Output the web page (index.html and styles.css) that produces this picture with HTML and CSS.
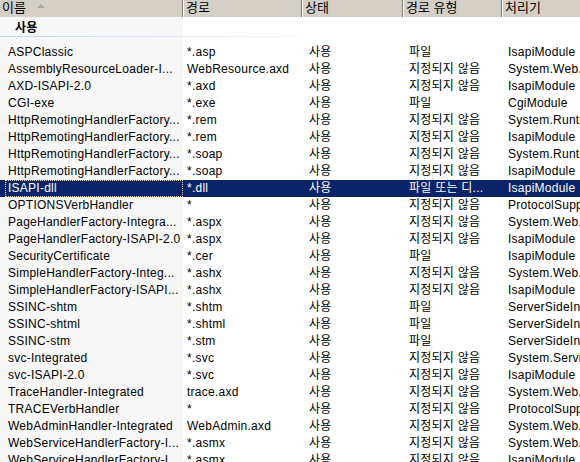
FILE: index.html
```html
<!DOCTYPE html>
<html lang="ko">
<head>
<meta charset="utf-8">
<link rel="stylesheet" href="styles.css">
</head>
<body>
<div class="list">
  <div class="header">
    <div class="hcell">이름 <span class="sort"></span></div>
    <div class="hcell">경로</div>
    <div class="hcell">상태</div>
    <div class="hcell">경로 유형</div>
    <div class="hcell">처리기</div>
  </div>
  <div class="body">
    <div class="group"><span class="gtitle">사용</span><span class="gline"></span></div>
    <div class="row"><div class="c name">ASPClassic</div><div class="c path">*.asp</div><div class="c st">사용</div><div class="c type">파일</div><div class="c hd">IsapiModule</div></div>
    <div class="row"><div class="c name">AssemblyResourceLoader-I...</div><div class="c path">WebResource.axd</div><div class="c st">사용</div><div class="c type">지정되지 않음</div><div class="c hd">System.Web.Handlers</div></div>
    <div class="row"><div class="c name">AXD-ISAPI-2.0</div><div class="c path">*.axd</div><div class="c st">사용</div><div class="c type">지정되지 않음</div><div class="c hd">IsapiModule</div></div>
    <div class="row"><div class="c name">CGI-exe</div><div class="c path">*.exe</div><div class="c st">사용</div><div class="c type">파일</div><div class="c hd">CgiModule</div></div>
    <div class="row"><div class="c name">HttpRemotingHandlerFactory...</div><div class="c path">*.rem</div><div class="c st">사용</div><div class="c type">지정되지 않음</div><div class="c hd">System.Runtime</div></div>
    <div class="row"><div class="c name">HttpRemotingHandlerFactory...</div><div class="c path">*.rem</div><div class="c st">사용</div><div class="c type">지정되지 않음</div><div class="c hd">IsapiModule</div></div>
    <div class="row"><div class="c name">HttpRemotingHandlerFactory...</div><div class="c path">*.soap</div><div class="c st">사용</div><div class="c type">지정되지 않음</div><div class="c hd">System.Runtime</div></div>
    <div class="row"><div class="c name">HttpRemotingHandlerFactory...</div><div class="c path">*.soap</div><div class="c st">사용</div><div class="c type">지정되지 않음</div><div class="c hd">IsapiModule</div></div>
    <div class="row sel"><div class="c name"><span class="focus">ISAPI-dll</span></div><div class="c path">*.dll</div><div class="c st">사용</div><div class="c type">파일 또는 디...</div><div class="c hd">IsapiModule</div></div>
    <div class="row"><div class="c name">OPTIONSVerbHandler</div><div class="c path">*</div><div class="c st">사용</div><div class="c type">지정되지 않음</div><div class="c hd">ProtocolSupportModule</div></div>
    <div class="row"><div class="c name">PageHandlerFactory-Integra...</div><div class="c path">*.aspx</div><div class="c st">사용</div><div class="c type">지정되지 않음</div><div class="c hd">System.Web.UI</div></div>
    <div class="row"><div class="c name">PageHandlerFactory-ISAPI-2.0</div><div class="c path">*.aspx</div><div class="c st">사용</div><div class="c type">지정되지 않음</div><div class="c hd">IsapiModule</div></div>
    <div class="row"><div class="c name">SecurityCertificate</div><div class="c path">*.cer</div><div class="c st">사용</div><div class="c type">파일</div><div class="c hd">IsapiModule</div></div>
    <div class="row"><div class="c name">SimpleHandlerFactory-Integ...</div><div class="c path">*.ashx</div><div class="c st">사용</div><div class="c type">지정되지 않음</div><div class="c hd">System.Web.UI</div></div>
    <div class="row"><div class="c name">SimpleHandlerFactory-ISAPI...</div><div class="c path">*.ashx</div><div class="c st">사용</div><div class="c type">지정되지 않음</div><div class="c hd">IsapiModule</div></div>
    <div class="row"><div class="c name">SSINC-shtm</div><div class="c path">*.shtm</div><div class="c st">사용</div><div class="c type">파일</div><div class="c hd">ServerSideIncludeModule</div></div>
    <div class="row"><div class="c name">SSINC-shtml</div><div class="c path">*.shtml</div><div class="c st">사용</div><div class="c type">파일</div><div class="c hd">ServerSideIncludeModule</div></div>
    <div class="row"><div class="c name">SSINC-stm</div><div class="c path">*.stm</div><div class="c st">사용</div><div class="c type">파일</div><div class="c hd">ServerSideIncludeModule</div></div>
    <div class="row"><div class="c name">svc-Integrated</div><div class="c path">*.svc</div><div class="c st">사용</div><div class="c type">지정되지 않음</div><div class="c hd">System.ServiceModel</div></div>
    <div class="row"><div class="c name">svc-ISAPI-2.0</div><div class="c path">*.svc</div><div class="c st">사용</div><div class="c type">지정되지 않음</div><div class="c hd">IsapiModule</div></div>
    <div class="row"><div class="c name">TraceHandler-Integrated</div><div class="c path">trace.axd</div><div class="c st">사용</div><div class="c type">지정되지 않음</div><div class="c hd">System.Web.Handlers</div></div>
    <div class="row"><div class="c name">TRACEVerbHandler</div><div class="c path">*</div><div class="c st">사용</div><div class="c type">지정되지 않음</div><div class="c hd">ProtocolSupportModule</div></div>
    <div class="row"><div class="c name">WebAdminHandler-Integrated</div><div class="c path">WebAdmin.axd</div><div class="c st">사용</div><div class="c type">지정되지 않음</div><div class="c hd">System.Web.Handlers</div></div>
    <div class="row"><div class="c name">WebServiceHandlerFactory-I...</div><div class="c path">*.asmx</div><div class="c st">사용</div><div class="c type">지정되지 않음</div><div class="c hd">System.Web.Services</div></div>
    <div class="row"><div class="c name">WebServiceHandlerFactory-I...</div><div class="c path">*.asmx</div><div class="c st">사용</div><div class="c type">지정되지 않음</div><div class="c hd">IsapiModule</div></div>
  </div>
</div>
</body>
</html>
```
FILE: styles.css
```css
html, body {
  margin: 0;
  padding: 0;
  background: #fff;
  overflow: hidden;
}
body {
  width: 580px;
  height: 462px;
  font-family: "Liberation Sans", "Noto Sans CJK KR", sans-serif;
  font-size: 12px;
  letter-spacing: 0.25px;
  color: #000;
}
.list {
  width: 580px;
  overflow: hidden;
}
.header {
  display: grid;
  grid-template-columns: 183px 119px 101px 99px 200px;
  height: 17px;
  background: #d4d0c8;
}
.hcell {
  height: 17px;
  line-height: 16px;
  padding-left: 3px;
  box-sizing: border-box;
  border-right: 1px solid #808080;
  box-shadow: inset 1px 0 0 #ffffff;
  white-space: nowrap;
  overflow: hidden;
  font-size: 13px;
  letter-spacing: 0;
}
.hcell:first-child {
  padding-left: 2px;
  box-shadow: none;
}
.sort {
  display: inline-block;
  width: 0;
  height: 0;
  margin-left: 7px;
  border-left: 4px solid transparent;
  border-right: 4px solid transparent;
  border-bottom: 4px solid #a8a8a8;
  vertical-align: 4px;
}
.body {
  background: linear-gradient(to right, #f7f7f7 0, #f7f7f7 183px, #fff 183px);
  height: 445px;
}
.group {
  height: 27px;
  display: flex;
  flex-direction: column;
}
.gtitle {
  font-weight: bold;
  padding-left: 15px;
  padding-top: 1px;
  line-height: 17px;
  height: 18px;
  font-family: "Noto Sans CJK KR", sans-serif;
  font-size: 12px;
}
.gline {
  display: block;
  height: 1px;
  width: 320px;
  background: linear-gradient(to right, #c5d8ef, #e3ecf7 70%, rgba(255,255,255,0));
}
.row {
  display: grid;
  grid-template-columns: 183px 119px 101px 99px 200px;
  height: 17px;
  line-height: 17px;
  white-space: nowrap;
}
.c {
  overflow: hidden;
}
.name { padding-left: 8px; }
.path { padding-left: 4px; }
.st { padding-left: 7px; }
.type { padding-left: 6px; }
.hd { padding-left: 6px; }
.row.sel {
  background: #0a246a;
  color: #fff;
}
.row.sel .name {
  padding-left: 5px;
}
.focus {
  display: block;
  height: 17px;
  box-sizing: border-box;
  line-height: 15px;
  border: 1px dotted #f5db95;
  padding-left: 2px;
}
```
